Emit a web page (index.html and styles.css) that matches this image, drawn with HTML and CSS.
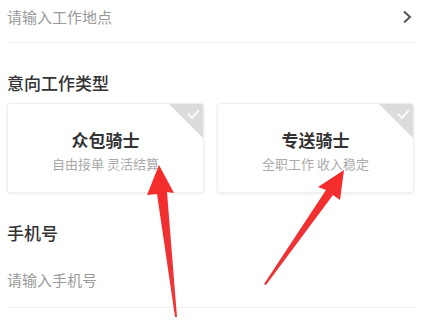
FILE: index.html
```html
<!DOCTYPE html>
<html>
    <head>
        <meta charset="utf-8">
        <title>骑士报名</title>
        <link rel="stylesheet" href="styles.css">
    </head>
    <body>
        <div class="form">
            <div class="field field-address">
                <span class="placeholder">请输入工作地点</span>
                <svg class="chevron" width="10" height="14" viewBox="0 0 10 14">
                    <path d="M2 1.5 L8 7 L2 12.5" fill="none" stroke="#555" stroke-width="2"/>
                </svg>
            </div>

            <h3 class="label label-type">意向工作类型</h3>
            <div class="cards">
                <div class="card">
                    <div class="corner">
                        <svg width="34" height="34" viewBox="0 0 34 34">
                            <path d="M0 0 H34 V34 Z" fill="#dcdcdc"/>
                            <path d="M19 10 L23 14 L30 6" fill="none" stroke="#fff" stroke-width="1.6"/>
                        </svg>
                    </div>
                    <div class="card-title">众包骑士</div>
                    <div class="card-desc">自由接单 灵活结算</div>
                </div>
                <div class="card">
                    <div class="corner">
                        <svg width="34" height="34" viewBox="0 0 34 34">
                            <path d="M0 0 H34 V34 Z" fill="#dcdcdc"/>
                            <path d="M19 10 L23 14 L30 6" fill="none" stroke="#fff" stroke-width="1.6"/>
                        </svg>
                    </div>
                    <div class="card-title">专送骑士</div>
                    <div class="card-desc">全职工作 收入稳定</div>
                </div>
            </div>

            <h3 class="label label-phone">手机号</h3>
            <div class="field field-phone">
                <span class="placeholder">请输入手机号</span>
            </div>
        </div>

        <svg class="arrows" width="426" height="323" viewBox="0 0 426 323">
            <defs>
                <linearGradient id="red" x1="0" y1="0" x2="0" y2="1">
                    <stop offset="0" stop-color="#f62b2b"/>
                    <stop offset="1" stop-color="#e8383a"/>
                </linearGradient>
            </defs>
            <path d="M159 165 L174 193 L167 192 L177 317 L175 317 L157 194 L147 195 Z" fill="url(#red)"/>
            <path d="M344 170 L340 200 L333 195 L266 285 L264 284 L326 190 L318 187 Z" fill="url(#red)"/>
        </svg>
    </body>
</html>
```

FILE: styles.css
```css
body{
    margin:0;
    background:#fff;
    font-family:"Noto Sans CJK SC","Noto Sans",sans-serif;
    color:#333;
}
.form{
    padding:0 11px 0 7px;
}
.field{
    display:flex;
    align-items:center;
    justify-content:space-between;
    border-bottom:1px solid #f0f0f0;
}
.field-address{
    padding:6px 3px 14px 0;
    height:22px;
}
.field-phone{
    margin-top:24px;
    padding-bottom:16px;
    height:22px;
}
.placeholder{
    font-size:15px;
    line-height:22px;
    color:#9a9a9a;
}
.chevron{
    display:block;
}
.label{
    margin:0;
    font-size:17px;
    line-height:24px;
    font-weight:500;
    color:#333;
}
.label-type{
    margin-top:28px;
}
.label-phone{
    margin-top:28px;
}
.cards{
    display:grid;
    grid-template-columns:197px 197px;
    gap:13px;
    margin-top:8px;
}
.card{
    position:relative;
    height:90px;
    box-sizing:border-box;
    padding-top:24px;
    border:1px solid #eee;
    border-radius:3px;
    box-shadow:0 1px 3px rgba(0,0,0,0.08);
    text-align:center;
    overflow:hidden;
}
.corner{
    position:absolute;
    top:0;
    right:0;
    line-height:0;
}
.card-title{
    font-size:17px;
    line-height:24px;
    font-weight:bold;
    color:#333;
}
.card-desc{
    margin-top:3px;
    font-size:13px;
    line-height:18px;
    color:#aaa;
}
.arrows{
    position:absolute;
    top:0;
    left:0;
    pointer-events:none;
}
```
